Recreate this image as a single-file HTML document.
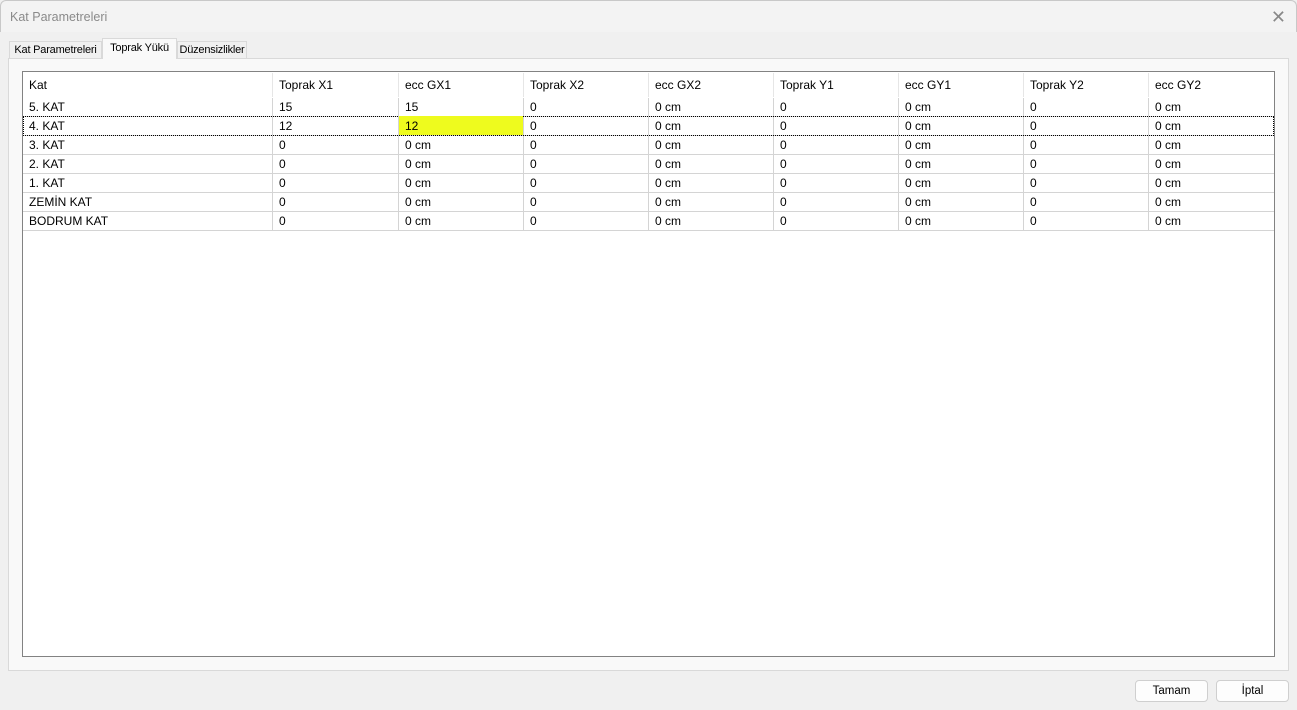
<!DOCTYPE html><html><head><style>
body{margin:0;width:1297px;height:710px;background:#f0f0f0;font-family:"Liberation Sans",sans-serif;font-size:12px;position:relative;overflow:hidden;color:#000}
.title{position:absolute;left:0;top:0;width:1295px;height:31px;background:#f3f3f3;border:1px solid #c8c8c8;border-bottom:none;border-radius:6px 6px 0 0}
.title span{position:absolute;left:9px;top:9px;color:#8a8a8a;font-size:12.5px}
.x{position:absolute;right:10px;top:6px;font-size:18px;color:#888;font-weight:lighter}
.tab{position:absolute;top:41px;height:17px;border:1px solid #d9d9d9;border-bottom:none;background:#f0f0f0;font-size:11px;line-height:17px;padding:0;text-align:center;box-sizing:border-box;letter-spacing:-0.2px}
.page{position:absolute;left:8px;top:58px;width:1279px;height:611px;border:1px solid #d9d9d9;background:#f9f9f9}
.grid{position:absolute;left:22px;top:71px;width:1251px;height:584px;border:1px solid #828282;background:#fff}
.row{position:absolute;left:0;height:19px;width:1251px;border-bottom:1px solid #d4d4d4}
.c{position:absolute;top:1px;height:19px;line-height:19px;padding-left:6px;box-sizing:border-box;border-left:1px solid #d4d4d4}
.btn{position:absolute;top:680px;height:20px;width:71px;border:1px solid #cfcfcf;border-radius:4px;background:#fdfdfd;text-align:center;line-height:20px;font-size:11.5px}
</style></head><body>
<div class="title"><span>Kat Parametreleri</span><div class="x">✕</div></div>
<div class="page"></div>
<div class="tab" style="left:9px;width:93px">Kat Parametreleri</div>
<div class="tab" style="left:102px;width:75px;top:38px;height:21px;line-height:19px;background:#f9f9f9;z-index:2">Toprak Yükü</div>
<div class="tab" style="left:177px;width:70px">Düzensizlikler</div>
<div class="grid" id="g"></div>
<div class="btn" style="left:1135px">Tamam</div>
<div class="btn" style="left:1216px">İptal</div>
<script>
var xs=[0,249,375,500,625,750,875,1000,1125,1250];
var rows=[["Kat","Toprak X1","ecc GX1","Toprak X2","ecc GX2","Toprak Y1","ecc GY1","Toprak Y2","ecc GY2"],
["5. KAT","15","15","0","0 cm","0","0 cm","0","0 cm"],["4. KAT","12","12","0","0 cm","0","0 cm","0","0 cm"]];
["3. KAT","2. KAT","1. KAT","ZEMİN KAT","BODRUM KAT"].forEach(n=>rows.push([n,"0","0 cm","0","0 cm","0","0 cm","0","0 cm"]));
var h="";
rows.forEach((r,i)=>{var top=i==0?0:25+(i-1)*19;var hh=i==0?24:19;
var st=i==0?"border-bottom:none;":"";
if(i==2)st+="outline:1px dotted #000;outline-offset:-1px;";
h+='<div class="row" style="top:'+top+'px;height:'+hh+'px;'+st+'">';
r.forEach((t,j)=>{var s='left:'+xs[j]+'px;width:'+(xs[j+1]-xs[j])+'px;height:'+(i==0?hh:hh-1)+'px;line-height:'+hh+'px;';
if(i==0)s+='border-left:1px solid #e6e6e6;top:1px;';
if(j==0)s+='border-left:none;';
if(i==2&&j==2)s+='background:#eefb1e;top:0;height:19px;line-height:21px;';
h+='<div class="c" style="'+s+'">'+t+'</div>';});
h+='</div>';});
document.getElementById('g').innerHTML=h;
</script>
</body></html>
